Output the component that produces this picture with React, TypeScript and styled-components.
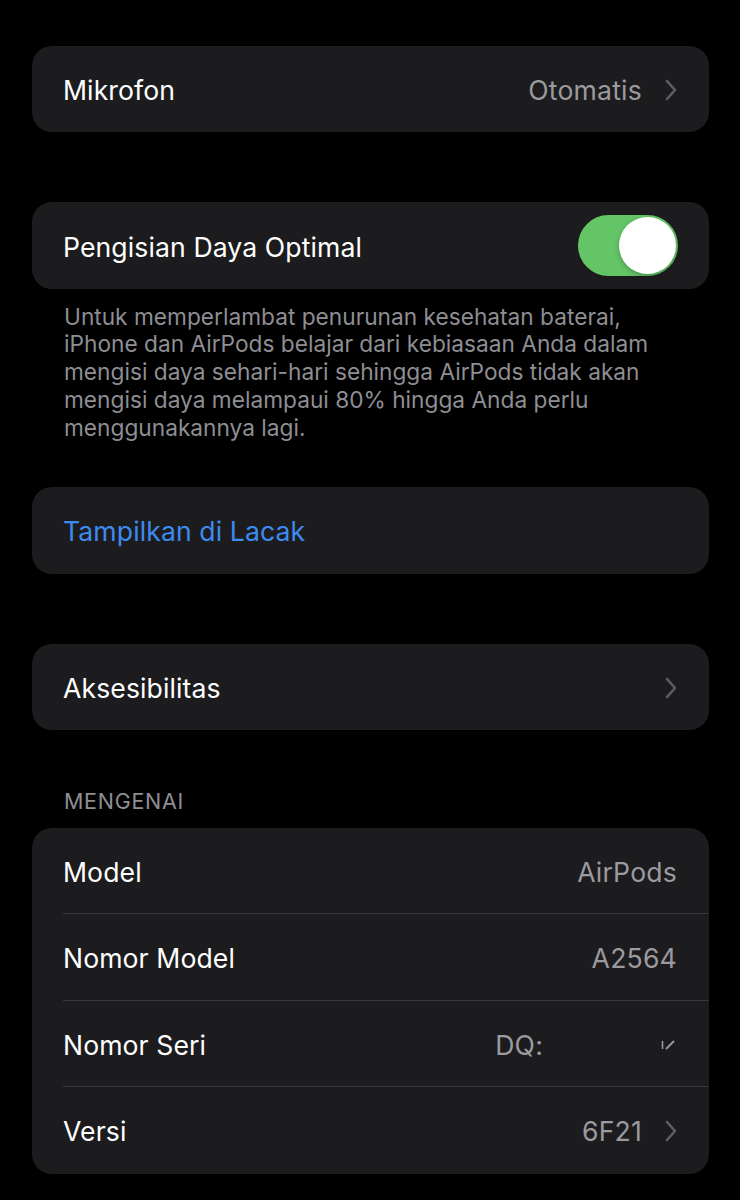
import React from 'react'
import styled, { createGlobalStyle } from 'styled-components'

const GlobalStyle = createGlobalStyle`
  html, body {
    margin: 0;
    padding: 0;
    background: #000;
  }
  body {
    font-family: Inter, "Noto Sans", "Liberation Sans", sans-serif;
    -webkit-font-smoothing: antialiased;
  }
`

const Page = styled.div`
  width: 740px;
  min-height: 1200px;
  box-sizing: border-box;
  padding: 46px 31px 0 32px;
  background: #000;
  display: flex;
  flex-direction: column;
`

const Group = styled.div<{ $after?: number }>`
  background: #1c1c1e;
  border-radius: 20px;
  overflow: hidden;
  margin-bottom: ${({ $after }) => $after ?? 0}px;
`

const Row = styled.div`
  padding-left: 31px;
  &:last-child > div {
    border-bottom: none;
  }
`

const RowInner = styled.div`
  height: 86.4px;
  box-sizing: border-box;
  display: flex;
  align-items: center;
  justify-content: space-between;
  padding: 2px 32px 0 0;
  border-bottom: 1px solid #38383b;
`

const Label = styled.span<{ $link?: boolean }>`
  font-size: 26.6px;
  letter-spacing: 0.1px;
  color: ${({ $link }) => ($link ? '#3d8bef' : '#ffffff')};
`

const Trailing = styled.div`
  display: flex;
  align-items: center;
  gap: 23px;
`

const Value = styled.span`
  font-size: 26.6px;
  letter-spacing: 0.2px;
  color: #9a9a9f;
`

const Chevron = () => (
  <svg width="12" height="22" viewBox="0 0 12 22" fill="none">
    <path
      d="M2 2 L10 11 L2 20"
      stroke="#5e5e63"
      strokeWidth="2.6"
      strokeLinecap="round"
      strokeLinejoin="round"
    />
  </svg>
)

const Toggle = styled.div<{ $on: boolean }>`
  width: 100px;
  height: 61px;
  border-radius: 31px;
  box-sizing: border-box;
  padding: 2px;
  background: ${({ $on }) => ($on ? '#63c566' : '#39393d')};
  display: flex;
  justify-content: ${({ $on }) => ($on ? 'flex-end' : 'flex-start')};
  margin: -2px -1px 0 0;
`

const Knob = styled.div`
  width: 57px;
  height: 57px;
  border-radius: 50%;
  background: #fff;
  box-shadow: 0 2px 5px rgba(0, 0, 0, 0.25);
`

const Footnote = styled.p`
  margin: 14px 0 46px;
  padding: 0 32px;
  font-size: 22.7px;
  line-height: 27.7px;
  color: #8e8e93;
`

const SectionHeader = styled.div`
  margin: 59px 0 15px;
  padding: 0 32px;
  font-size: 21.5px;
  line-height: 24px;
  letter-spacing: 0.7px;
  color: #8e8e93;
  text-transform: uppercase;
`

const Serial = styled.div`
  display: flex;
  align-items: center;
  gap: 118px;
  margin-right: 2px;
`

// remaining strokes of the masked serial number
const SerialTail = () => (
  <svg width="14" height="12" viewBox="0 0 14 12" fill="none">
    <path d="M1.5 2 L1.5 10" stroke="#9a9a9f" strokeWidth="1.6" />
    <path d="M5 10 L13 2" stroke="#9a9a9f" strokeWidth="1.8" />
  </svg>
)

type Item = { label: string; value?: string; chevron?: boolean }

const about: Item[] = [
  { label: 'Model', value: 'AirPods' },
  { label: 'Nomor Model', value: 'A2564' },
  { label: 'Nomor Seri' },
  { label: 'Versi', value: '6F21', chevron: true },
]

const App = () => (
  <>
    <GlobalStyle />
    <Page>
      <Group $after={70}>
        <Row>
          <RowInner>
            <Label>Mikrofon</Label>
            <Trailing>
              <Value>Otomatis</Value>
              <Chevron />
            </Trailing>
          </RowInner>
        </Row>
      </Group>

      <Group>
        <Row>
          <RowInner>
            <Label>Pengisian Daya Optimal</Label>
            <Toggle $on>
              <Knob />
            </Toggle>
          </RowInner>
        </Row>
      </Group>
      <Footnote>
        Untuk memperlambat penurunan kesehatan baterai, iPhone dan AirPods
        belajar dari kebiasaan Anda dalam mengisi daya sehari-hari sehingga
        AirPods tidak akan mengisi daya melampaui 80% hingga Anda perlu
        menggunakannya lagi.
      </Footnote>

      <Group $after={70}>
        <Row>
          <RowInner>
            <Label $link>Tampilkan di Lacak</Label>
          </RowInner>
        </Row>
      </Group>

      <Group>
        <Row>
          <RowInner>
            <Label>Aksesibilitas</Label>
            <Chevron />
          </RowInner>
        </Row>
      </Group>

      <SectionHeader>Mengenai</SectionHeader>
      <Group>
        {about.map((item) => (
          <Row key={item.label}>
            <RowInner>
              <Label>{item.label}</Label>
              {item.value === undefined ? (
                <Serial>
                  <Value>DQ:</Value>
                  <SerialTail />
                </Serial>
              ) : (
                <Trailing>
                  <Value>{item.value}</Value>
                  {item.chevron && <Chevron />}
                </Trailing>
              )}
            </RowInner>
          </Row>
        ))}
      </Group>
    </Page>
  </>
)

export default App
